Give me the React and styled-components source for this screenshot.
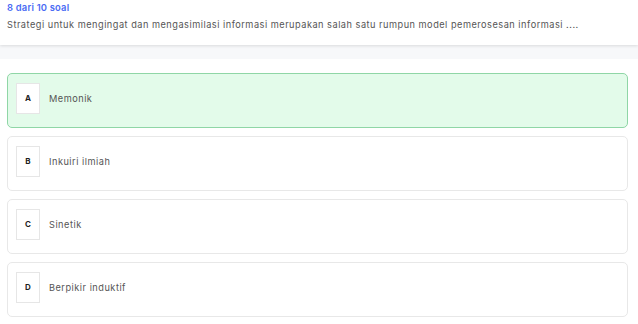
import React from "react";
import styled, { createGlobalStyle } from "styled-components";

const GlobalStyle = createGlobalStyle`
  html, body {
    margin: 0;
    padding: 0;
    background: #ffffff;
    font-family: "Inter", "Noto Sans", sans-serif;
  }
`;

const options = [
  { key: "A", text: "Memonik", selected: true },
  { key: "B", text: "Inkuiri ilmiah" },
  { key: "C", text: "Sinetik" },
  { key: "D", text: "Berpikir induktif" },
];

export default function App() {
  return (
    <>
      <GlobalStyle />
      <Page>
        <Header>
          <Counter>8 dari 10 soal</Counter>
          <Question>
            Strategi untuk mengingat dan mengasimilasi informasi merupakan salah satu rumpun model pemerosesan informasi ....
          </Question>
        </Header>
        <Band />
        <OptionList>
          {options.map((o) => (
            <Option key={o.key} $selected={o.selected}>
              <Letter>{o.key}</Letter>
              <OptionText>{o.text}</OptionText>
            </Option>
          ))}
        </OptionList>
      </Page>
    </>
  );
}

const Page = styled.div`
  width: 638px;
  height: 324px;
  overflow: hidden;
  background: #fff;
`;

const Header = styled.div`
  position: relative;
  z-index: 1;
  height: 45px;
  padding: 2px 7px 0;
  box-sizing: border-box;
  background: #fff;
  box-shadow: 0 1px 3px rgba(0, 0, 0, 0.12);
`;

const Counter = styled.div`
  font-size: 9.4px;
  font-weight: 600;
  letter-spacing: 0.2px;
  color: #4a6bf4;
  line-height: 12px;
`;

const Question = styled.div`
  margin-top: 5px;
  font-size: 9.2px;
  letter-spacing: 0.5px;
  color: #555;
  line-height: 12px;
  white-space: nowrap;
`;

const Band = styled.div`
  height: 14px;
  background: #f7f8fa;
`;

const OptionList = styled.div`
  display: flex;
  flex-direction: column;
  gap: 8px;
  padding: 14px 10px 0 7px;
`;

const Option = styled.div`
  display: flex;
  align-items: center;
  gap: 9px;
  height: 55px;
  box-sizing: border-box;
  padding: 0 8px 5px;
  border-radius: 5px;
  border: 1px solid ${(p) => (p.$selected ? "#8fd6a6" : "#e8e8e8")};
  background: ${(p) => (p.$selected ? "#e3fbea" : "#fff")};
`;

const Letter = styled.div`
  width: 24px;
  height: 31px;
  box-sizing: border-box;
  border: 1px solid #e6e6e6;
  background: #fff;
  display: flex;
  align-items: center;
  justify-content: center;
  font-size: 8px;
  font-weight: 700;
  color: #1f1f1f;
`;

const OptionText = styled.div`
  font-size: 9.2px;
  letter-spacing: 0.5px;
  color: #555;
`;
